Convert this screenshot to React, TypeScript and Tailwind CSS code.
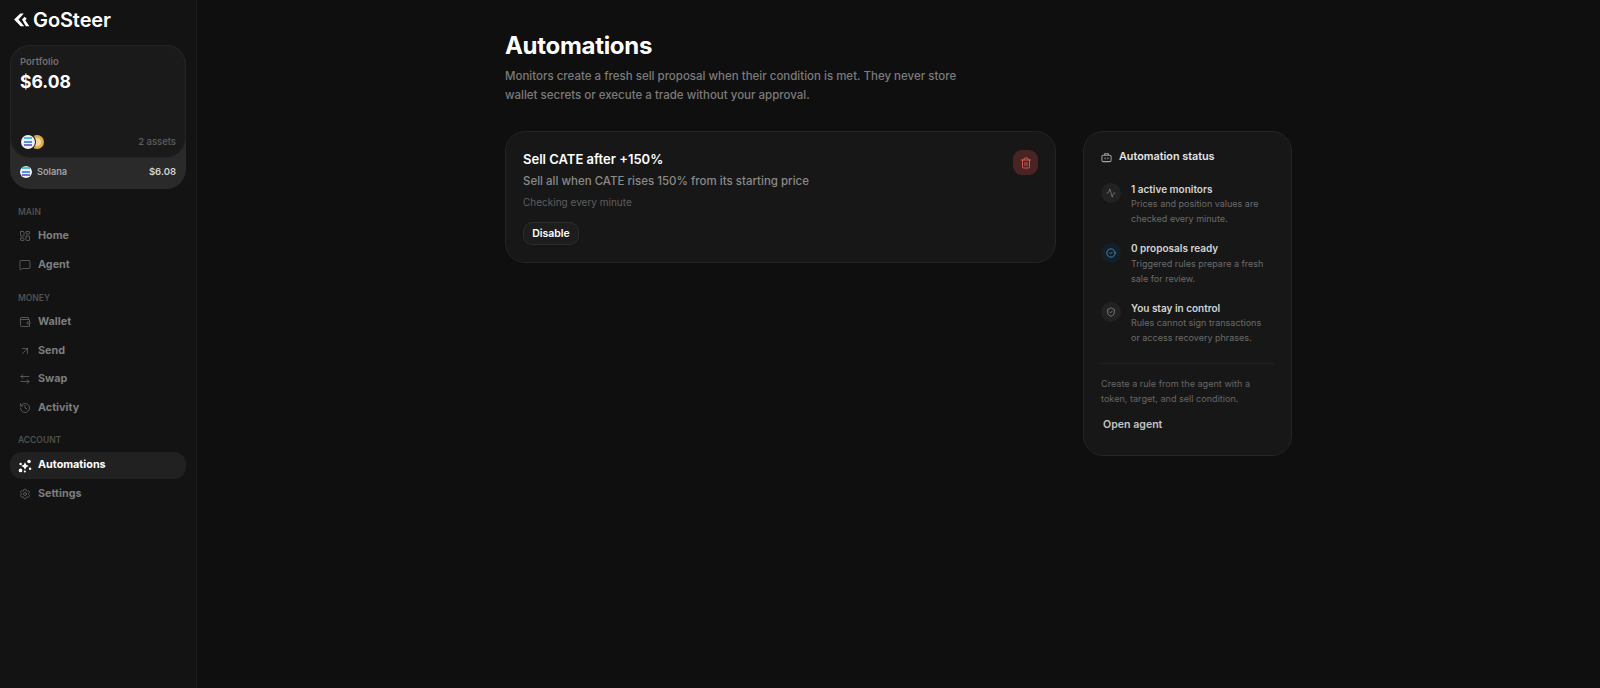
import { Activity, ArrowLeftRight, ArrowUpRight, CircleCheck, History, LayoutDashboard, MessageSquare, Settings, ShieldCheck, Trash2, Wallet } from 'lucide-react'
import type { ComponentType, ReactNode } from 'react'

type NavItem = { label: string; icon: ComponentType<{ className?: string; strokeWidth?: number }> }

const sections: { title: string; items: NavItem[]; gap: string }[] = [
  { title: 'MAIN', gap: 'mb-[14px]', items: [{ label: 'Home', icon: LayoutDashboard }, { label: 'Agent', icon: MessageSquare }] },
  {
    title: 'MONEY',
    gap: 'mb-[13px]',
    items: [
      { label: 'Wallet', icon: Wallet },
      { label: 'Send', icon: ArrowUpRight },
      { label: 'Swap', icon: ArrowLeftRight },
      { label: 'Activity', icon: History },
    ],
  },
]

function SolanaCoin({ className }: { className: string }) {
  return (
    <div className={`flex flex-col items-center justify-center gap-[1.5px] rounded-full bg-[#eef1f6] ${className}`}>
      <span className="h-[2px] w-[62%] bg-[#45c4d8]" />
      <span className="h-[2px] w-[62%] bg-[#5a8fdc]" />
      <span className="h-[2px] w-[62%] bg-[#7a6fd6]" />
    </div>
  )
}

function AutomationsIcon() {
  return (
    <svg viewBox="0 0 16 16" className="h-[14px] w-[14px]" fill="white">
      <path d="M8 3.8 9.4 6.7l2.9 1.3-2.9 1.4L8 12.2 6.6 9.4 3.7 8l2.9-1.3z" />
      <circle cx="12.6" cy="2.8" r="2" />
      <circle cx="2.9" cy="13" r="2.1" />
      <circle cx="13.8" cy="11.2" r="1.4" />
      <circle cx="3" cy="5.8" r="1.4" />
      <circle cx="7.8" cy="14.2" r="1.2" />
    </svg>
  )
}

function StatusRow({ icon, title, children, glow }: { icon: ReactNode; title: string; children: ReactNode; glow?: boolean }) {
  return (
    <div className="flex gap-[10px]">
      <div className={`mt-[1.5px] flex h-[20px] w-[20px] shrink-0 items-center justify-center rounded-full ${glow ? 'bg-[#13202a]' : 'bg-[#222222]'}`}>
        {icon}
      </div>
      <div className="w-[135px]">
        <div className="text-[10px] leading-[14px] font-semibold text-[#d4d4d4]">{title}</div>
        <div className="mt-[0.5px] text-[9px] leading-[15px] text-[#6b6b6b]">{children}</div>
      </div>
    </div>
  )
}

export default function App() {
  return (
    <div className="flex h-[688px] w-[1600px] overflow-hidden bg-[#0f0f0f] font-['Inter',sans-serif]">
      {/* Sidebar */}
      <aside className="w-[197px] shrink-0 border-r border-[#1c1c1c] bg-[#131313] px-[10px]">
        <div className="flex h-[45px] items-center gap-[3px] pb-[5px] pl-[4px]">
          <svg viewBox="0 0 18 16" className="h-[14px] w-[16px]" fill="white">
            <path d="M7 0.5 0 7.5l7.5 7.5h4L5 7.5l6-7z" />
            <path d="M9 7.5 12 4.2l2.4 2.4-1.6 1.6 4.6 6.8h-4z" />
          </svg>
          <span className="text-[20px] leading-none font-semibold tracking-[-0.1px] text-white">GoSteer</span>
        </div>

        {/* Portfolio card */}
        <div className="w-[176px] rounded-[20px] bg-[#2a2a2a]">
          <div className="flex h-[113px] flex-col justify-between rounded-[20px] border border-[#242424] bg-[#1a1a1a] px-[9px] pt-[10px] pb-[8px]">
            <div>
              <div className="text-[9.5px] leading-[12px] font-semibold text-[#6e6e6e]">Portfolio</div>
              <div className="mt-[2px] text-[17.5px] leading-[24px] font-bold text-white">$6.08</div>
            </div>
            <div className="flex items-center justify-between">
              <div className="flex items-center pl-[1px]">
                <div className="relative order-2 -ml-[5px] h-[14px] w-[14px] rounded-full bg-[#e3ab45]">
                  <div className="absolute top-[3px] left-[3px] h-[8px] w-[8px] rounded-full bg-[#f0d8a0]" />
                </div>
                <SolanaCoin className="z-10 order-1 h-[14px] w-[14px] ring-1 ring-[#1a1a1a]" />
              </div>
              <span className="text-[9.5px] font-medium text-[#5f5f5f]">2 assets</span>
            </div>
          </div>
          <div className="flex h-[31px] items-center justify-between px-[10px] pb-[3px]">
            <div className="flex items-center gap-[5px]">
              <SolanaCoin className="h-[12px] w-[12px]" />
              <span className="text-[9.2px] font-semibold text-[#a3a3a3]">Solana</span>
            </div>
            <span className="text-[9.5px] font-semibold text-[#d4d4d4]">$6.08</span>
          </div>
        </div>

        {/* Navigation */}
        <nav className="mt-[18px]">
          {sections.map((section) => (
            <div key={section.title} className={section.gap}>
              <div className="mb-[4px] pl-[8px] text-[8.5px] leading-[11px] font-semibold text-[#505050]">{section.title}</div>
              {section.items.map((item) => (
                <div key={item.label} className="flex h-[28.5px] items-center gap-[7px] pl-[9px] text-[10.8px] font-bold text-[#7d7d7d]">
                  <item.icon className="h-[12px] w-[12px] text-[#666666]" strokeWidth={1.6} />
                  {item.label}
                </div>
              ))}
            </div>
          ))}
          <div className="pl-[8px] text-[8.5px] leading-[11px] font-semibold text-[#505050]">ACCOUNT</div>
          <div className="mt-[6px] flex h-[27px] w-[176px] items-center gap-[6px] rounded-[12px] bg-[#212121] pl-[8px] text-[10.8px] font-bold text-white">
            <AutomationsIcon />
            Automations
          </div>
          <div className="mt-[1px] flex h-[28.5px] items-center gap-[7px] pl-[9px] text-[10.8px] font-bold text-[#7d7d7d]">
            <Settings className="h-[12px] w-[12px] text-[#666666]" strokeWidth={1.6} />
            Settings
          </div>
        </nav>
      </aside>

      {/* Main */}
      <main className="flex-1">
        <div className="mx-auto w-[787px] pt-[30px]">
          <h1 className="text-[24px] leading-[32px] font-bold tracking-[-0.3px] text-white">Automations</h1>
          <p className="mt-[5px] w-[470px] text-[11.5px] leading-[19px] font-medium text-[#7b7b7b]">
            Monitors create a fresh sell proposal when their condition is met. They never store wallet secrets or execute a trade without your approval.
          </p>

          <div className="mt-[26px] flex items-start gap-[27px]">
            <section className="relative h-[132px] w-[551px] rounded-[20px] border border-[#242424] bg-[#171717] px-[17px] pt-[19px]">
              <div className="text-[13px] leading-[17px] font-semibold text-white">Sell CATE after +150%</div>
              <div className="mt-[4px] text-[11.5px] leading-[18px] font-medium text-[#8a8a8a]">Sell all when CATE rises 150% from its starting price</div>
              <div className="mt-[4px] text-[10px] leading-[16px] text-[#5e5e5e]">Checking every minute</div>
              <button className="mt-[12px] flex h-[23px] w-[56px] items-center justify-center rounded-[9px] border border-[#2c2c2c] bg-[#1d1d1d] text-[10.5px] font-semibold text-white">
                Disable
              </button>
              <button className="absolute top-[18px] right-[17px] flex h-[25px] w-[25px] items-center justify-center rounded-[9px] bg-[#4a2422]">
                <Trash2 className="h-[12px] w-[12px] text-[#e0605a]" strokeWidth={1.8} />
              </button>
            </section>

            <section className="h-[325px] w-[209px] rounded-[20px] border border-[#242424] bg-[#171717] px-[17px] pt-[18px]">
              <div className="flex items-center gap-[7px] text-[10.8px] leading-[14px] font-semibold text-[#e5e5e5]">
                <svg viewBox="0 0 12 12" className="h-[11px] w-[11px]" fill="none" stroke="#a3a3a3" strokeWidth="1.1">
                  <rect x="1" y="3.5" width="10" height="7" rx="1.5" />
                  <path d="M4 3.5V1.8h4v1.7M4.5 6v2M7.5 6v2" />
                </svg>
                Automation status
              </div>
              <div className="mt-[17.5px] flex flex-col gap-[15px]">
                <StatusRow icon={<Activity className="h-[10px] w-[10px] text-[#8a8a8a]" strokeWidth={1.6} />} title="1 active monitors">
                  Prices and position values are checked every minute.
                </StatusRow>
                <StatusRow glow icon={<CircleCheck className="h-[10px] w-[10px] text-[#4aa3d8]" strokeWidth={1.8} />} title="0 proposals ready">
                  Triggered rules prepare a fresh sale for review.
                </StatusRow>
                <StatusRow icon={<ShieldCheck className="h-[10px] w-[10px] text-[#a3a3a3]" strokeWidth={1.6} />} title="You stay in control">
                  Rules cannot sign transactions or access recovery phrases.
                </StatusRow>
              </div>
              <div className="mt-[18px] border-t border-[#222222] pt-[12px] text-[9.1px] leading-[15px] text-[#666666]">
                Create a rule from the agent with a token, target, and sell condition.
              </div>
              <div className="mt-[12px] pl-[2px] text-[10.6px] leading-[14px] font-semibold text-[#c4c4c4]">Open agent</div>
            </section>
          </div>
        </div>
      </main>
    </div>
  )
}
